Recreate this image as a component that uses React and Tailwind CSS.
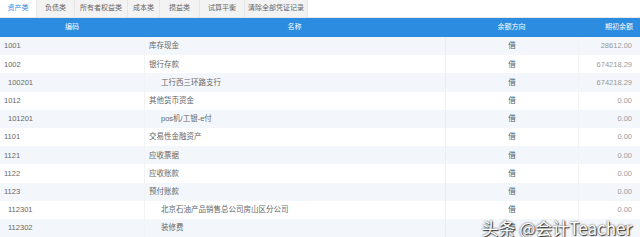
import React from 'react';

const tabs = ['资产类', '负债类', '所有者权益类', '成本类', '损益类', '试算平衡', '清除全部凭证记录'];
const tabWidths = ['w-[37px]', 'w-[38px]', 'w-[53px]', 'w-[32px]', 'w-[40px]', 'w-[45px]', 'w-[63px]'];

const rows = [
  { code: '1001', name: '库存现金', bal: '28612.00' },
  { code: '1002', name: '银行存款', bal: '674218.29' },
  { code: '100201', name: '工行西三环路支行', bal: '674218.29', sub: true },
  { code: '1012', name: '其他货币资金', bal: '0.00' },
  { code: '101201', name: 'pos机/工银-e付', bal: '0.00', sub: true },
  { code: '1101', name: '交易性金融资产', bal: '0.00' },
  { code: '1121', name: '应收票据', bal: '0.00' },
  { code: '1122', name: '应收账款', bal: '0.00' },
  { code: '1123', name: '预付账款', bal: '0.00' },
  { code: '112301', name: '北京石油产品销售总公司房山区分公司', bal: '0.00', sub: true },
  { code: '112302', name: '装修费', bal: '0.00', sub: true },
];

const App = () => {
  return (
    <div className="relative w-[640px] h-[237px] overflow-hidden bg-white text-[7px] text-[#666] font-['Liberation_Sans','Noto_Sans_CJK_SC',sans-serif]">
      <div className="flex h-[18px] border-b border-[#e8e8e8]">
        {tabs.map((t, i) => (
          <div
            key={t}
            className={`${tabWidths[i]} flex items-center justify-center border-r border-[#e6e6e6] ${
              i === 0 ? 'bg-white text-[#2b8ce0]' : 'bg-[#f3f3f3] text-[#666]'
            }`}
          >
            {t}
          </div>
        ))}
      </div>

      <div className="grid grid-cols-[144px_301px_133px_1fr] h-[19px] bg-[#2b8ce0] text-white items-center">
        <div className="text-center">编码</div>
        <div className="text-center">名称</div>
        <div className="text-center">余额方向</div>
        <div className="text-right pr-[7px]">期初余额</div>
      </div>

      {rows.map((r, i) => (
        <div
          key={r.code}
          className={`grid grid-cols-[144px_301px_133px_1fr] h-[18.2px] items-center text-[7.5px] ${
            i % 2 === 0 ? 'bg-[#f3f7fb]' : 'bg-white'
          }`}
        >
          <div className={r.sub ? 'pl-[8px]' : 'pl-[4px]'}>{r.code}</div>
          <div className={`h-full flex items-center border-l border-[#f1f3f5] ${r.sub ? 'pl-[16px]' : 'pl-[4px]'}`}>
            {r.name}
          </div>
          <div className="h-full flex items-center justify-center border-l border-[#eceff2] text-[#555]">借</div>
          <div className="h-full flex items-center justify-end pr-[8px] border-l border-[#f1f3f5] text-[#999]">{r.bal}</div>
        </div>
      ))}

      <div className="absolute right-[8px] bottom-[-3px] text-[17px] text-white font-['Noto_Sans_CJK_SC',sans-serif] [text-shadow:0_0_2px_#333,1px_1px_1px_#333]">
        头条 @会计Teacher
      </div>
    </div>
  );
};

export default App;
